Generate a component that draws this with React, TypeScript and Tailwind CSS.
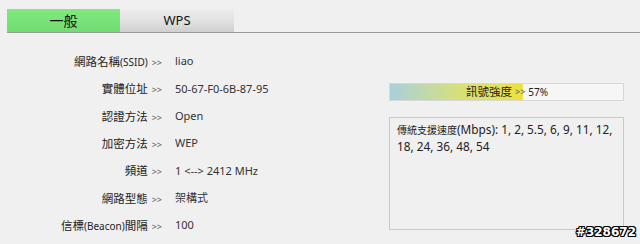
import React from 'react';

const rows: { label: React.ReactNode; value: string }[] = [
  { label: <>網路名稱<span className="text-[10px]">(SSID)</span></>, value: 'liao' },
  { label: '實體位址', value: '50-67-F0-6B-87-95' },
  { label: '認證方法', value: 'Open' },
  { label: '加密方法', value: 'WEP' },
  { label: '頻道', value: '1 <--> 2412 MHz' },
  { label: '網路型態', value: '架構式' },
  { label: <>信標<span className="text-[10px]">(Beacon)</span>間隔</>, value: '100' },
];

const font = "font-['Noto_Sans','Noto_Sans_CJK_TC',sans-serif]";

const App: React.FC = () => {
  const signal = 57;
  return (
    <div className={`relative w-[640px] h-[244px] bg-[#f0f0f0] text-[#222] overflow-hidden ${font}`}>
      {/* tabs */}
      <div className="flex items-end h-[33px] pl-[7px]">
        <div className="w-[113px] h-[24px] flex items-center justify-center bg-gradient-to-b from-[#80ea80] to-[#72dc72] border-b border-[#9a9a9a] text-[14px] text-[#111]">
          一般
        </div>
        <div className="w-[114px] h-[24px] flex items-center justify-center bg-gradient-to-b from-[#ececec] via-[#e2e2e2] to-[#cfcfcf] border-b border-[#9a9a9a] text-[13px] text-[#111]">
          WPS
        </div>
        <div className="flex-1 h-[24px] border-b border-[#9a9a9a]" />
      </div>

      <div className="flex mt-[15px]">
        {/* left info list */}
        <div className="w-[389px]">
          {rows.map((r, i) => (
            <div key={i} className="flex items-center h-[27.3px]">
              <div className="w-[162px] text-right text-[11.5px] whitespace-nowrap">
                {r.label}
                <span className="text-[9px] text-[#555] ml-[4px]">&gt;&gt;</span>
              </div>
              <div className="ml-[13px] text-[11px] text-[#333] whitespace-nowrap">{r.value}</div>
            </div>
          ))}
        </div>

        {/* right side */}
        <div className="w-[235px]">
          <div className="relative mt-[35px] h-[18px] border border-[#d8d8d8] bg-[#f6f6f6]">
            <div
              className="absolute left-0 top-0 bottom-0 bg-gradient-to-r from-[#a9cfd9] via-[#d6df7c] to-[#ece33a]"
              style={{ width: `${signal}%` }}
            />
            <div className="relative h-full flex items-center pl-[76px] text-[11.5px] whitespace-nowrap">
              訊號強度
              <span className="text-[9px] text-[#555] ml-[3px]">&gt;&gt;</span>
              <span className="text-[10px] ml-[3px]">{signal}%</span>
            </div>
          </div>
          <div className="mt-[16px] h-[113px] border border-[#c8c8c8] pl-[7px] pt-[3px] text-[11.8px] leading-[16px] text-[#222]">
            <span className="text-[10px]">傳統支援速度</span>(Mbps): 1, 2, 5.5, 6, 9, 11, 12,
            <br />
            18, 24, 36, 48, 54
          </div>
        </div>
      </div>

      <div className="absolute right-[4px] bottom-[3px] text-[12px] font-bold text-white font-['DejaVu_Sans',sans-serif] [text-shadow:1px_0_0_#000,-1px_0_0_#000,0_1px_0_#000,0_-1px_0_#000,1px_1px_0_#000,-1px_-1px_0_#000,1px_-1px_0_#000,-1px_1px_0_#000]">
        #328672
      </div>
    </div>
  );
};

export default App;
